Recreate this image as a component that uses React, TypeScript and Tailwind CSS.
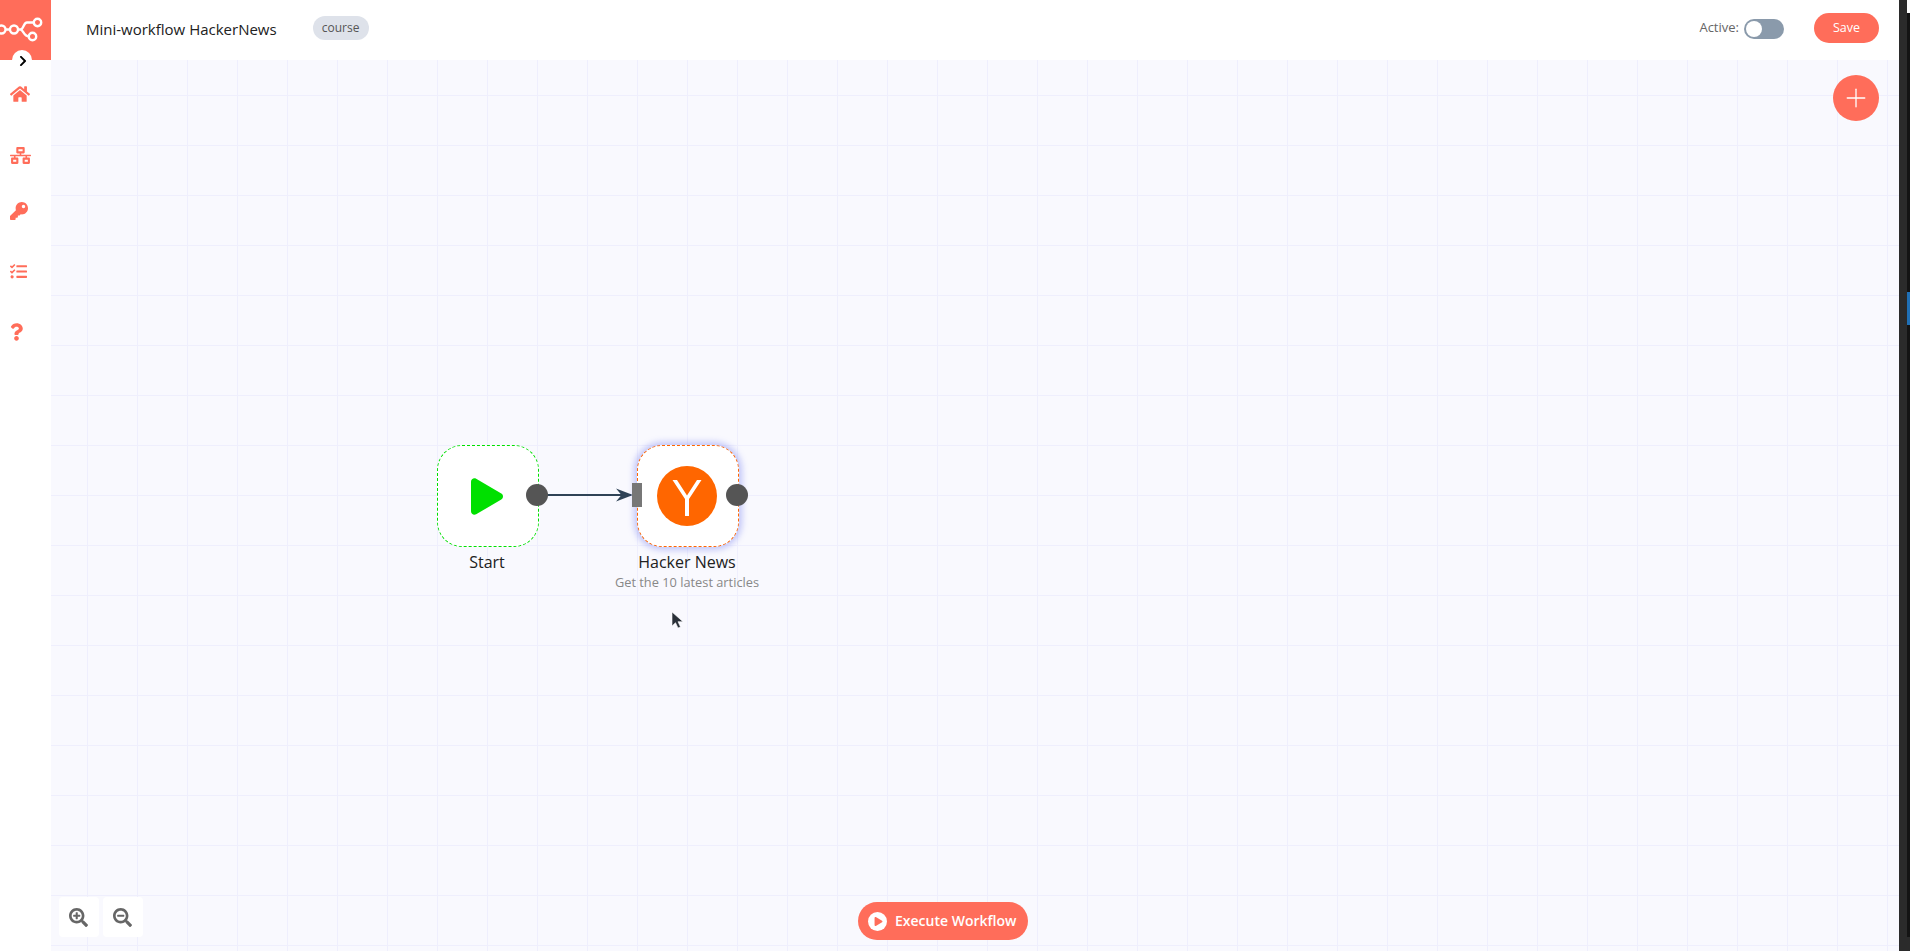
import React from 'react';
import { Plus } from 'lucide-react';
import { FaHome, FaKey, FaNetworkWired, FaQuestion, FaTasks, FaChevronRight, FaPlay, FaSearchMinus, FaSearchPlus } from 'react-icons/fa';

function SideIcon({ children, className }: { children: React.ReactNode; className: string }) {
  return <div className={`flex h-[60px] items-center text-[#ff6d5a] ${className}`}>{children}</div>;
}

export default function App() {
  return (
    <div className="flex h-[951px] w-[1910px] overflow-hidden bg-white font-['Open_Sans',sans-serif]">
      <div className="flex h-full w-[1899px] flex-col">
        {/* top bar */}
        <div className="flex h-[60px] shrink-0">
          <div className="relative w-[51px] shrink-0 bg-[#ff6d5a]">
            <svg viewBox="0 0 51 60" className="h-[60px] w-[51px]" fill="none" stroke="white" strokeWidth="2.4">
              <circle cx="1.5" cy="29.5" r="4" />
              <circle cx="14" cy="29.5" r="4" />
              <circle cx="37.5" cy="22.5" r="3.7" />
              <circle cx="32.5" cy="36.5" r="3.7" />
              <path d="M5.5 29.5H10M18 29.5H20.5C23.5 29.5 23.5 22.5 27 22.5H33.8M20.5 29.5C23 29.5 24 36.5 28.8 36.5" />
            </svg>
            <div className="absolute left-3 top-[50px] z-10 flex h-5 w-5 items-center justify-center rounded-full bg-white">
              <FaChevronRight className="ml-[2px] mt-[1px] h-3 w-3 text-black" />
            </div>
          </div>
          <div className="flex flex-1 items-center">
            <div className="mb-[2px] ml-[35px] text-[15px] text-[#212121]">Mini-workflow HackerNews</div>
            <div className="mb-[4px] ml-9 flex h-6 w-14 items-center justify-center rounded-full bg-[#dee2ea] text-xs text-[#555]">course</div>
            <div className="mb-[4px] ml-auto flex items-center">
              <span className="text-[13px] text-[#666]">Active:</span>
              <div className="ml-[5px] mt-[2px] flex h-5 w-10 items-center rounded-full bg-[#8a9aab] pl-[2px]">
                <div className="h-4 w-4 rounded-full bg-white" />
              </div>
              <div className="ml-[30px] mr-[20px] flex h-[30px] w-[65px] items-center justify-center rounded-full bg-[#ff6d5a] text-[12.5px] font-medium text-white">Save</div>
            </div>
          </div>
        </div>
        <div className="flex min-h-0 flex-1">
          {/* side menu */}
          <div className="flex w-[51px] shrink-0 flex-col">
            <SideIcon className="mt-[4px] pl-[10px]"><FaHome className="h-[20px] w-[20px]" /></SideIcon>
            <SideIcon className="mt-[1px] pl-[10px]"><FaNetworkWired className="h-[21px] w-[21px]" /></SideIcon>
            <SideIcon className="-mt-[4px] pl-[10px]"><FaKey className="h-[18px] w-[18px]" /></SideIcon>
            <SideIcon className="pl-[10px]"><FaTasks className="h-[17px] w-[17px]" /></SideIcon>
            <SideIcon className="mt-[1px] pl-[10px]"><FaQuestion className="h-[18px] w-[13px]" /></SideIcon>
          </div>
          {/* canvas */}
          <div className="relative flex-1 overflow-hidden bg-[#f9f9fe] bg-[linear-gradient(to_right,#efeffd_1px,transparent_1px),linear-gradient(to_bottom,#efeffd_1px,transparent_1px)] bg-[size:50px_50px] bg-[position:36px_35px]">
            <div className="absolute left-[1782px] top-[15px] flex h-[46px] w-[46px] items-center justify-center rounded-full bg-[#ff6d5a] text-white">
              <Plus className="h-[30px] w-[30px]" strokeWidth={1.05} />
            </div>

            {/* Start node */}
            <div className="absolute left-[386px] top-[385px] flex h-[102px] w-[102px] items-center justify-center rounded-[25px] border border-dashed border-[#00e000] bg-white">
              <FaPlay className="mr-[2px] h-[37px] w-[32px] text-[#00e000]" />
            </div>
            <div className="absolute left-[385px] top-[490px] w-[102px] text-center text-base text-[#212121]">Start</div>

            {/* connection */}
            <svg className="absolute left-[480px] top-[420px] h-[30px] w-[120px]" viewBox="0 0 120 30" fill="none">
              <path d="M16 15H100" stroke="#2f4356" strokeWidth="2" />
              <path d="M85 8.5L102 15L85 21.5L90.5 15Z" fill="#2f4356" />
            </svg>
            <div className="absolute left-[475px] top-[424px] h-[22px] w-[22px] rounded-full bg-[#555]" />

            {/* Hacker News node */}
            <div className="absolute left-[586px] top-[385px] flex h-[102px] w-[102px] items-center justify-center rounded-[25px] border border-dashed border-[#ff6600] bg-white shadow-[0_0_6px_3px_rgba(110,120,240,0.4)]">
              <svg viewBox="0 0 60 60" className="mr-[2px] h-[60px] w-[60px]">
                <circle cx="30" cy="30" r="30" fill="#ff6600" />
                <path d="M15.5 14H20L30 29.5L40 14H44.5L32 33V50H28V33Z" fill="white" />
              </svg>
            </div>
            <div className="absolute left-[581px] top-[423px] h-6 w-[10px] bg-[#777]" />
            <div className="absolute left-[675px] top-[424px] h-[22px] w-[22px] rounded-full bg-[#555]" />
            <div className="absolute left-[536px] top-[490px] w-[200px] text-center text-base text-[#212121]">Hacker News</div>
            <div className="absolute left-[536px] top-[514px] w-[200px] text-center text-[12.8px] leading-4 text-[#888]">Get the 10 latest articles</div>

            <svg viewBox="0 0 13 18" className="absolute left-[620px] top-[551px] h-[18px] w-[13px]">
              <path d="M1 1V15L4.5 11.7L7 17L9.5 16L7 10.7H12Z" fill="#2a3038" stroke="white" strokeWidth="0.6" />
            </svg>

            {/* zoom buttons */}
            <div className="absolute bottom-[14px] left-2 flex gap-1">
              <div className="flex h-10 w-10 items-center justify-center rounded-[4px] bg-white pr-[1px] text-[#666]"><FaSearchPlus className="h-[19px] w-[19px]" /></div>
              <div className="flex h-10 w-10 items-center justify-center rounded-[4px] bg-white pr-[1px] text-[#666]"><FaSearchMinus className="h-[19px] w-[19px]" /></div>
            </div>

            {/* execute */}
            <div className="absolute bottom-[11px] left-[807px] flex h-[38px] w-[170px] items-center rounded-full bg-[#ff6d5a] pl-[10px] text-white">
              <span className="flex h-[19px] w-[19px] items-center justify-center rounded-full bg-white">
                <FaPlay className="ml-[1px] h-[9px] w-[9px] text-[#ff6d5a]" />
              </span>
              <span className="ml-[8px] text-sm font-semibold">Execute Workflow</span>
            </div>
          </div>
        </div>
      </div>
      {/* window edge */}
      <div className="flex w-[11px] shrink-0 bg-[#2b2b2b]">
        <div className="w-2 bg-[#2b2b2b]" />
        <div className="relative flex flex-1 flex-col bg-[#141414]">
          <div className="h-[13px] bg-white" />
          <div className="absolute left-0 top-[292px] h-[33px] w-full bg-[#1f6fb5]" />
          <div className="absolute bottom-0 left-0 h-[14px] w-full bg-[#2b2b2b]" />
        </div>
      </div>
    </div>
  );
}
